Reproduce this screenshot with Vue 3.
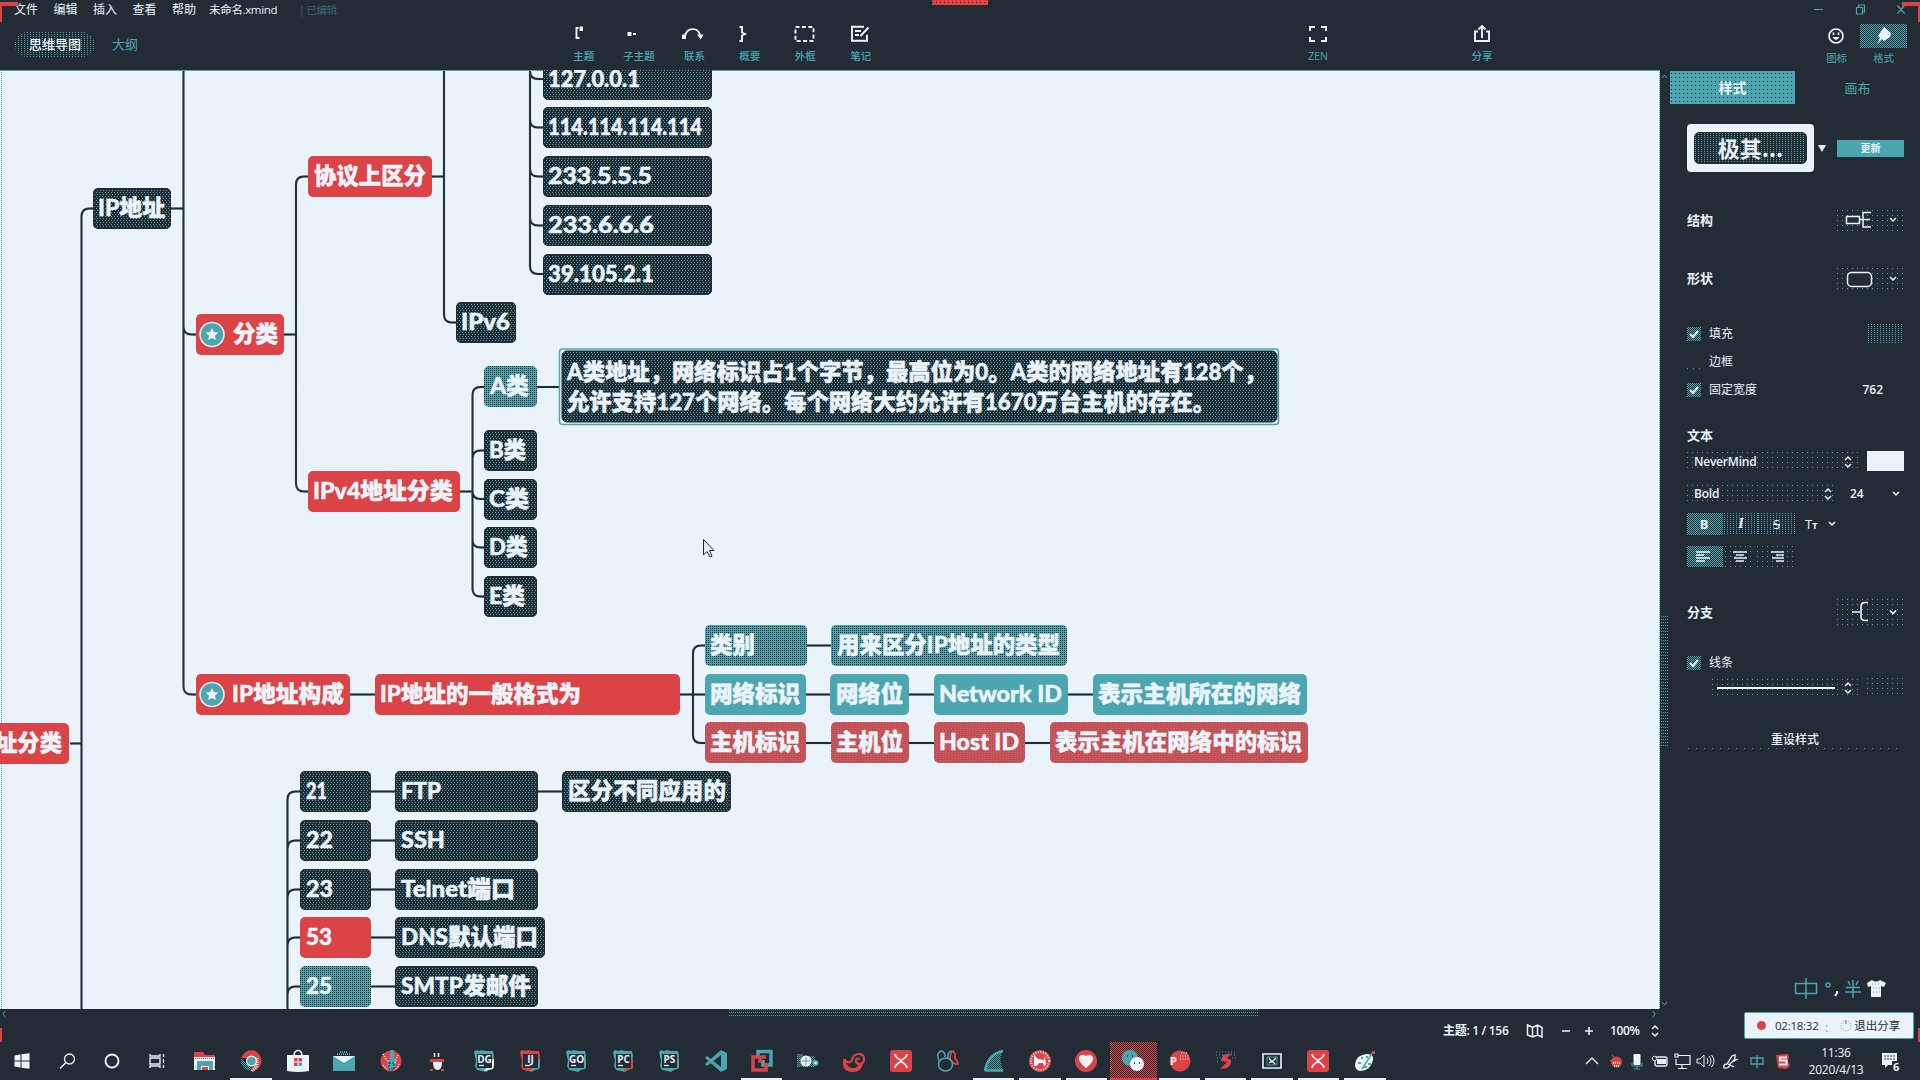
<script setup>
const menus = ['文件', '编辑', '插入', '查看', '帮助']

const tools = [
  { label: '主题', art: '<path d="M6.500 6H4.500V16H7.500" /><path d="M7.500 4.500h3.500v4.500h-3.500z" fill="currentColor" stroke="none"/><path d="M9 6.500h2" />' },
  { label: '子主题', art: '<path d="M0.500 10h4v4h-4zM6 11h3v2h-3z" fill="currentColor" stroke="none"/>' },
  { label: '联系', art: '<path d="M3 14C5 5 16 5 18 13" fill="none"/><path d="M0 12.500h4v4.500h-4zM15 12.500h6.500l-2.800 5z" fill="currentColor" stroke="none"/>' },
  { label: '概要', art: '<path d="M1.500 5h2.500v5.500l3 1.500-3 1.500v5.500H1.500" fill="none"/>' },
  { label: '外框', art: '<rect x="2.500" y="5" width="18" height="14" fill="none" stroke-dasharray="4 2.400"/>' },
  { label: '笔记', art: '<path d="M15 4.800H3v14h15v-6M6 9h6M6 13h4M11.500 14L19.500 5.500" fill="none"/>' },
]

// Mind map nodes: x1, y1, x2, kind, label, text x, text width
const H = 41
const nodes = [
  [93, 188, 171, 'k', 'IP地址', 98, 67],
  [308, 156, 432, 'r', '协议上区分', 314, 112],
  [196, 314, 284, 'r', '分类', 233, 45, 1],
  [456, 302, 516, 'k', 'IPv6', 461, 49],
  [543, 59, 712, 'k', '127.0.0.1', 548, 92],
  [543, 107, 712, 'k', '114.114.114.114', 548, 154],
  [543, 156, 712, 'k', '233.5.5.5', 548, 104],
  [543, 205, 712, 'k', '233.6.6.6', 548, 106],
  [543, 254, 712, 'k', '39.105.2.1', 548, 106],
  [484, 366, 537, 'd', 'A类', 490, 39],
  [484, 430, 537, 'k', 'B类', 489, 37],
  [484, 479, 537, 'k', 'C类', 489, 40],
  [484, 527, 537, 'k', 'D类', 489, 39],
  [484, 576, 537, 'k', 'E类', 489, 36],
  [308, 471, 460, 'r', 'IPv4地址分类', 313, 140],
  [196, 674, 350, 'r', 'IP地址构成', 232, 112, 1],
  [375, 674, 680, 'r', 'IP地址的一般格式为', 380, 201],
  [705, 625, 807, 'd', '类别', 710, 45],
  [831, 625, 1067, 'd', '用来区分IP地址的类型', 837, 223],
  [705, 674, 806, 't', '网络标识', 710, 90],
  [830, 674, 909, 't', '网络位', 836, 67],
  [934, 674, 1068, 't', 'Network ID', 939, 123],
  [1093, 674, 1307, 't', '表示主机所在的网络', 1098, 203],
  [705, 722, 806, 'p', '主机标识', 710, 90],
  [831, 722, 909, 'p', '主机位', 836, 67],
  [934, 722, 1025, 'p', 'Host ID', 939, 80],
  [1050, 722, 1308, 'p', '表示主机在网络中的标识', 1055, 247],
  [-40, 723, 69, 'r', '址分类', -5, 67],
  [300, 771, 371, 'k', '21', 306, 21],
  [300, 820, 371, 'k', '22', 306, 27],
  [300, 869, 371, 'k', '23', 306, 27],
  [300, 917, 371, 'r', '53', 306, 26],
  [300, 966, 371, 'd', '25', 306, 26],
  [395, 771, 538, 'k', 'FTP', 401, 40],
  [395, 820, 538, 'k', 'SSH', 401, 44],
  [395, 869, 538, 'k', 'Telnet端口', 401, 114],
  [395, 917, 545, 'k', 'DNS默认端口', 401, 137],
  [395, 966, 538, 'k', 'SMTP发邮件', 401, 130],
  [562, 771, 731, 'k', '区分不同应用的', 568, 158],
]
const fills = { k: 'url(#dark)', r: '#dc4347', t: '#4ba6b0', d: 'url(#deep)', p: 'url(#warm)' }

const down = (x, ys, x2) => ys.map(y => `M${x} ${y - 16}V${y - 8}Q${x} ${y} ${x + 8} ${y}H${x2}`).join('')
const up = (x, ys, x2) => ys.map(y => `M${x} ${y + 16}V${y + 8}Q${x} ${y} ${x + 8} ${y}H${x2}`).join('')
const wires = [
  'M70 743.500H81.500M171 208.500H183.500M284 334.500H296M432 176.500H444M460 491.500H472.500M537 387H560M350 694.500H375M680 694.500H705',
  'M81.500 216V1009M183.500 70V686M296 184V484M444 70V314M530 70V267M472.500 395V590M693 653V736M287.500 799V1009',
  up(81.5, [208.5], 93), down(183.5, [334.5, 694.5], 196), up(296, [176.5], 308), down(296, [491.5], 308),
  down(444, [322.5], 456), down(530, [79, 127.5, 176.500, 225.500, 274], 543),
  up(472.5, [387, 450.5], 484), down(472.5, [499, 547.5, 596.500], 484),
  up(693, [645.5], 705), down(693, [743], 705), up(287.5, [791.5, 840.5, 889.500, 937.500, 986.500], 300),
  'M807 645.500H831M806 694.500H830M909 694.500H934M1068 694.500H1093M806 743H831M909 743H934M1025 743H1050',
  'M371 791.500H395M538 791.500H562M371 840.500H395M371 889.500H395M371 937.500H395M371 986.500H395',
].join('')

const W = '#ebf3fa', T = '#4ba6b0', R = '#dc4347', K = '#232b35'
const ide = (name, a, b) => `<path d="M2 3l2-2 3 1 3-1 4 1h7l1 5-1 4 1 8-4 1-4 3-4-1-5-1-2-4 1-5z" fill="${a}"/><path d="M12 22l9-2 1-4V9z" fill="${b}"/><path d="M5 5h15v14H5z" fill="${K}"/><text x="12.500" y="13.500" text-anchor="middle" font-size="10" font-weight="700" font-family="Open Sans, sans-serif" fill="${W}">${name}</text><path d="M7 16.500h5" stroke="${W}" stroke-width="1.300"/>`
const xmind = `<rect x="1" y="1" width="22" height="22" rx="3" fill="${R}"/><path d="M6 5q0 3 6 6.500Q18 8 18 5M6 19q0-3 6-6.500 6 3.500 6 6.500" stroke="${W}" stroke-width="1.700" fill="none"/>`
const system = [
  `<path d="M4.500 6.500l6-1v6h-6zM11.500 5.300l8-1v7.200h-8zM4.500 12.500h6v6l-6-1zM11.500 12.500h8v7.200l-8-1z" fill="${W}"/>`,
  `<circle cx="14.500" cy="10" r="5" fill="none" stroke="${W}" stroke-width="1.300"/><path d="M11 13.500L5 19.500" stroke="${W}" stroke-width="1.500"/>`,
  `<circle cx="12" cy="12" r="6.500" fill="none" stroke="${W}" stroke-width="1.900"/>`,
  `<path d="M5 5v2h10V5M5 19v-2h10v2M5 9h10v6H5zM18.500 5v3M18.500 10v4M18.500 16v3" fill="none" stroke="${W}" stroke-width="1.300"/>`,
]
const apps = [
  { art: `<path d="M1 3h9l2 3h10v4H1z" fill="${R}"/><path d="M1 8h21v13H1z" fill="${W}"/><path d="M2 7.500h20M2 9.500h20M2 18h3M19 18h3" stroke="${R}" stroke-dasharray="1 1"/><path d="M4 12h16v9h-4v-4H8v4H4z" fill="${T}"/><path d="M9 18h6v3H9z" fill="${R}"/>` },
  { line: 1, art: `<path d="M2.500 9A10 10 0 0 1 22 9z" fill="${R}"/><path d="M22 9A10 10 0 0 1 11 22l5-8 2-5z" fill="${R}"/><path d="M18 9v8l-5 5" stroke="${W}" stroke-dasharray="1 1" stroke-width="3" fill="none"/><path d="M2.500 9A10 10 0 0 0 11 22l2-6-7-3z" fill="url(#dots)"/><circle cx="12.500" cy="12" r="5.500" fill="${W}"/><circle cx="12.500" cy="12" r="4.300" fill="${T}"/>` },
  { art: `<path d="M8 7Q8 1.500 12 1.500T16 7" fill="none" stroke="${W}" stroke-width="1.600"/><path d="M1 6h22v16q-11 2-22 0z" fill="${W}"/><path d="M8 9h3.500v3.500H8zM8 13.500h3.500V17H8z" fill="${R}"/><path d="M12.500 9H16v3.500h-3.500z" fill="${R}"/><path d="M12.500 13.500H16V17h-3.500z" fill="${T}"/>` },
  { art: `<path d="M1 7h22v15H1z" fill="${T}"/><path d="M1 7h22L12 14z" fill="${W}"/><path d="M5 5h14M8 3h8" stroke="${T}" stroke-dasharray="1 1" stroke-width="2"/>` },
  { art: `<circle cx="12" cy="12" r="10.500" fill="${R}"/><path d="M11 1h4v7l2 4-1 9H9l-1-7 3-5z" fill="${T}"/><path d="M4 5l5 8M19 6l-3 8M4 16l4 4M20 15l-3 5" stroke="${W}" stroke-width="1.500" stroke-dasharray="1 1.500"/><path d="M10 14h5v6h-5z" fill="none" stroke="${K}" stroke-dasharray="2 1"/>` },
  { art: `<path d="M9.500 4v4M13.500 4v4" stroke="${W}" stroke-width="1.500"/><path d="M5 10h14v3H5zM5 20h3v2H5zM16 20h3v2h-3z" fill="${R}"/><path d="M8 13h9q0 8-4.500 8T8 13z" fill="${W}"/>` },
  { art: ide('DG', T, W) }, { art: ide('IJ', R, T) }, { art: ide('GO', T, T) }, { art: ide('PC', T, R) }, { art: ide('PS', T, T) },
  { art: `<path d="M17 1l6 3v16l-6 3L1 9l2-2 14 11V6L3 17l-2-2z" fill="${T}"/>` },
  { line: 1, art: `<path d="M8 7V2.500h13V16h-8V11" fill="none" stroke="${T}" stroke-width="3.500"/><path d="M11 8H3v13h13v-7M16 8H10v6" fill="none" stroke="${R}" stroke-width="3.500"/>` },
  { art: `<path d="M1 5h6l1 2h11v11H1z" fill="url(#dots)"/><circle cx="10" cy="12" r="5.500" fill="${W}"/><path d="M10 8v8M6 12h8" stroke="${T}"/><circle cx="19.500" cy="14" r="3" fill="${T}"/><circle cx="19.500" cy="14" r="1.300" fill="${W}"/>` },
  { art: `<path d="M1 10q0 11 9 11 7 0 8-7" fill="none" stroke="${R}" stroke-width="4"/><path d="M2 12q6 3 7-1 1-6 7-6 5 0 5 5t-5 5q-4-1-3-4 1-2 4-1" fill="none" stroke="${R}" stroke-width="2.200"/>` },
  { art: xmind },
  { art: `<path d="M14 10q0-6 3-8 3 3 2 8 3 2 3 5-4 1-8-5" fill="none" stroke="${R}" stroke-width="1.700"/><path d="M3 12q-3-8 2-10 4 0 4 6M12 9q-1-6 4-7" fill="none" stroke="${T}" stroke-width="1.500"/><ellipse cx="9.500" cy="15.500" rx="7" ry="6.500" fill="none" stroke="${T}" stroke-width="1.500"/>` },
  { line: 1, art: `<path d="M2 21Q5 4 21 1q-5 10 0 20z" fill="url(#dots)"/><path d="M3 22Q6 5 21 2M3 21.500h18" fill="none" stroke="${T}" stroke-width="2.500"/>` },
  { line: 1, art: `<circle cx="12" cy="12" r="11" fill="${R}"/><circle cx="12" cy="12" r="9" fill="none" stroke="${W}" stroke-width="2" stroke-dasharray="1 1.500"/><path d="M6 6l4 4 6 1 1-4 1 9-2 1-1-3h-4l-2 3H6z" fill="${W}"/>` },
  { line: 1, art: `<circle cx="12" cy="12" r="11" fill="${R}"/><path d="M12 19Q4 13 5 8q3-4 7-1 4-3 7 1 1 5-7 11z" fill="${W}"/>` },
  { active: 1, art: `<circle cx="9" cy="9" r="8" fill="${T}"/><circle cx="16" cy="15" r="7" fill="${W}"/><path d="M6 7h1M11 7h1M13 14h1M18 14h1" stroke="${K}" stroke-width="1.500"/>` },
  { line: 1, art: `<circle cx="13" cy="12" r="10.500" fill="${R}"/><path d="M14 4h6M13 7h9M13 10h9" stroke="${W}" stroke-dasharray="1 1.500" fill="none"/><text x="3" y="16" font-size="11" font-weight="700" font-family="Open Sans, sans-serif" fill="${W}">P</text>` },
  { line: 1, art: `<path d="M2 3h20M2 6h20M3 9h4M18 9h4M3 13h3" stroke="${T}" stroke-dasharray="1 2"/><path d="M18 4l-9 2-2 6 6 1-7 7q12 0 11-9l-4-2z" fill="${R}"/>` },
  { line: 1, art: `<path d="M3 5h18v14H3z" fill="${K}" stroke="${W}" stroke-width="1.600"/><path d="M7 8h10v8H7z" fill="none" stroke="${T}"/><path d="M9 9l3 4 4-4M9 14l3-2 3 3" stroke="${W}" fill="none" stroke-width="1.300"/>` },
  { line: 1, art: xmind },
  { line: 1, art: `<path d="M2 17q0-11 12-12 7 0 6 6-2 10-12 11-5 0-6-5z" fill="${W}"/><path d="M5 14h3M8 9h2M13 8h2M15 15h3M11 18h3" stroke="${T}" stroke-width="2"/><path d="M9 20L20 3" stroke="${T}" stroke-width="1.500"/><path d="M19 2h3v3h-3z" fill="${R}"/>` },
]
const tray = [
  [1592, `<path d="M6 15l6-6 6 6" fill="none" stroke="${W}" stroke-width="1.300"/>`],
  [1616, `<path d="M8 6l4 4M6 12h4" stroke="${T}"/><ellipse cx="12.500" cy="13" rx="5.500" ry="5.500" fill="${R}"/><path d="M9 14h8M10 17h6" stroke="${W}" stroke-dasharray="1 1" stroke-width="2"/>`],
  [1637, `<rect x="8.500" y="5" width="7" height="11" rx="1" fill="${W}"/><path d="M7 14v3h10v-3M12 17v3M9 20h6" fill="none" stroke="${T}"/>`],
  [1660, `<rect x="7" y="8" width="12" height="9" rx="2" fill="none" stroke="${W}" stroke-width="1.300"/><path d="M9 10h9v5H9z" fill="${W}"/><circle cx="6.500" cy="9.500" r="2.200" fill="${K}" stroke="${W}"/>`],
  [1682, `<path d="M8 6.500h12v9H6V10M12 16v3M8 19.500h9M5 5h3v3H5z" fill="none" stroke="${W}" stroke-width="1.200"/>`],
  [1705, `<path d="M4 10h3l4-4v12l-4-4H4zM14 9q2 3 0 6M16 7q4 5 0 10M18.500 6q5 6 0 12" fill="none" stroke="${W}"/>`],
  [1731, `<path d="M5 19q-1-4 3-4l5-8 3-1 0 4-5 5q-1 5-6 4zM13 13l6-3M9 15l6 3" fill="none" stroke="${W}" stroke-width="1.300"/>`],
  [1757, `<path d="M6 9h12v6H6zM12 6v13" fill="none" stroke="${T}" stroke-width="1.300"/>`],
  [1783, `<path d="M5 6l12-1 1 3-1 4 2 5-4 3-8-1-1-6z" fill="${R}"/><path d="M16 8.500H9v3h6.500v4H8" fill="none" stroke="${W}" stroke-width="2"/>`],
]
</script>

<template>
  <div class="screen">
    <header>
      <div class="menubar">
        <nav><span v-for="m in menus" :key="m">{{ m }}</span></nav>
        <span class="file">未命名.xmind</span><span class="edited">| 已编辑</span>
        <svg class="winbtns" width="100" height="20" viewBox="1810 0 100 20" fill="none" stroke="#4ba6b0" stroke-width="1.200">
          <path d="M1814 9.500h9M1856.500 7.500h6v6.500h-6zM1858.500 7V5h6v7h-2M1897.500 5.500l7 8M1904.500 5.500l-7 8" />
        </svg>
      </div>
      <div class="toolbar">
        <div class="views"><b class="pill">思维导图</b><span>大纲</span></div>
        <div class="tools">
          <div v-for="t in tools" :key="t.label" class="tool">
            <svg width="24" height="24" viewBox="0 0 24 24" stroke="currentColor" stroke-width="1.900" fill="none" v-html="t.art" />
            <span>{{ t.label }}</span>
          </div>
        </div>
        <div class="tool zen">
          <svg width="24" height="24" viewBox="0 0 24 24" stroke="currentColor" stroke-width="2" fill="none"><path d="M4 9V5h5M15 5h5v4M20 15v4h-5M9 19H4v-4" /></svg>
          <span>ZEN</span>
        </div>
        <div class="tool share">
          <svg width="24" height="24" viewBox="0 0 24 24" stroke="currentColor" stroke-width="1.900" fill="none"><path d="M8 9.500H5V19h14V9.500h-3M12 16V4.500M8.500 7.500L12 4l3.500 3.500" /></svg>
          <span>分享</span>
        </div>
        <div class="tool side emoji">
          <svg width="24" height="24" viewBox="0 0 24 24" stroke="currentColor" stroke-width="1.700" fill="none"><circle cx="11" cy="12" r="7" /><path d="M7.500 13h7q-3.500 6-7 0z" fill="currentColor" stroke="none" /><path d="M8.500 8.500v2.500M13.500 8.500v2.500" /></svg>
          <span>图标</span>
        </div>
        <div class="tool side format">
          <i class="fmt mesh"><svg width="24" height="24" viewBox="0 0 24 24" fill="#ebf3fa"><path d="M12 3l7 6-1 4-6 4-2-2-5 5 3-6-2-2z" /></svg></i>
          <span>格式</span>
        </div>
      </div>
    </header>

    <main>
      <svg class="canvas" width="1660" height="939" viewBox="0 70 1660 939">
        <defs>
          <pattern id="dark" width="3" height="4" patternUnits="userSpaceOnUse"><path fill="#232b35" d="M0 0h3v4H0z" /><path fill="#4ba6b0" d="M0 0h1v1H0zM1 2h1v1H1z" /></pattern>
          <pattern id="deep" width="2" height="2" patternUnits="userSpaceOnUse"><path fill="#4ba6b0" d="M0 0h2v2H0z" /><path fill="#232b35" d="M0 0h1v1H0z" /></pattern>
          <pattern id="warm" width="3" height="4" patternUnits="userSpaceOnUse"><path fill="#dc4347" d="M0 0h3v4H0z" /><path fill="#4ba6b0" d="M0 0h1v1H0zM1 2h1v1H1z" /></pattern>
          <pattern id="dots" width="2" height="2" patternUnits="userSpaceOnUse"><path fill="#4ba6b0" d="M0 0h1v1H0zM1 1h1v1H1z" /></pattern>
        </defs>
        <path d="M1.500 72V1009M1659.500 72V1009" stroke="#4ba6b0" stroke-dasharray="1 1" />
        <path :d="wires" class="halo" /><path :d="wires" class="wire" />
        <g v-for="(n, i) in nodes" :key="i">
          <rect :x="n[0]" :y="n[1]" :width="n[2] - n[0]" :height="H" rx="5" :fill="fills[n[3]]" />
          <rect v-if="n[3] === 'k'" :x="n[0] + .5" :y="n[1] + .5" :width="n[2] - n[0] - 1" :height="H - 1" rx="5" fill="none" stroke="#232b35" />
          <g v-if="n[7]" :transform="`translate(212 ${n[1] + 20.5})`">
            <circle r="12" fill="#4ba6b0" stroke="#ebf3fa" stroke-width="1.500" />
            <path d="M0-6.500L1.900-2.400L6.300-2L3 1.200L3.900 5.600L0 3.400L-3.900 5.600L-3 1.200L-6.300-2L-1.900-2.400z" fill="#ebf3fa" />
          </g>
          <text :x="n[5]" :y="n[1] + 28.3" :textLength="n[6]" lengthAdjust="spacingAndGlyphs">{{ n[4] }}</text>
        </g>
        <rect x="559.500" y="349" width="719" height="75.500" rx="3" fill="none" stroke="#4ba6b0" stroke-width="1.500" />
        <rect x="562" y="351" width="715" height="71" rx="5" fill="url(#dark)" stroke="#232b35" />
        <text x="567" y="380" textLength="699" lengthAdjust="spacingAndGlyphs">A类地址，网络标识占1个字节，最高位为0。A类的网络地址有128个，</text>
        <text x="567" y="410" textLength="648" lengthAdjust="spacingAndGlyphs">允许支持127个网络。每个网络大约允许有1670万台主机的存在。</text>
        <path d="M703.500 539.500v15.500l3.500-3.500 3 5.500 2-1-2.500-5.500h4.500z" fill="#ebf3fa" stroke="#232b35" />
        <path d="M0 70.500H543M712 70.500H1660" stroke="#4ba6b0" />
      </svg>

      <div class="vbar">
        <svg width="10" height="8" viewBox="0 0 10 8" fill="none" stroke="#4ba6b0"><path d="M2 6l2.500-3L7 6" /></svg>
        <i class="thumb mesh3" />
        <svg width="10" height="8" viewBox="0 0 10 8" fill="none" stroke="#4ba6b0"><path d="M2 2l2.500 3L7 2" /></svg>
      </div>

      <aside>
        <div class="tabs"><b>样式</b><span>画布</span></div>
        <div class="theme">
          <div class="card"><b>极其...</b></div>
          <i class="tri" />
          <b class="update">更新</b>
        </div>
        <div class="row head r1"><b>结构</b>
          <svg width="67" height="24" viewBox="1837 210 67 24" class="dd"><g fill="none" stroke="#ebf3fa" stroke-width="1.500"><rect x="1846.500" y="216.500" width="13" height="7" fill="#232b35" /><path d="M1860 219.500h10M1871 212.500h-8v14.500h8" /><path d="M1890 218l3 3 3-3" /></g></svg>
        </div>
        <div class="row head r2"><b>形状</b>
          <svg width="67" height="24" viewBox="1837 268 67 24" class="dd"><g fill="none" stroke="#ebf3fa" stroke-width="1.500"><rect x="1847.500" y="272.500" width="24" height="14" rx="4" fill="#232b35" /><path d="M1890 277l3 3 3-3" /></g></svg>
        </div>
        <div class="row opt r3"><i class="check mesh"><svg width="14" height="14" viewBox="0 0 14 14"><path d="M3 7l3 3 5-6" /></svg></i><span>填充</span><i class="swatch dim" /></div>
        <div class="row opt r4"><i class="check off" /><span>边框</span></div>
        <div class="row opt r5"><i class="check mesh"><svg width="14" height="14" viewBox="0 0 14 14"><path d="M3 7l3 3 5-6" /></svg></i><span>固定宽度</span><span class="num">762</span></div>
        <div class="row head r6"><b>文本</b></div>
        <div class="row r7"><div class="select wide">NeverMind<svg class="ud" width="10" height="14" viewBox="0 0 10 14"><path d="M2 5l3-3 3 3M2 9l3 3 3-3" /></svg></div><i class="swatch white" /></div>
        <div class="row r8"><div class="select">Bold<svg class="ud" width="10" height="14" viewBox="0 0 10 14"><path d="M2 5l3-3 3 3M2 9l3 3 3-3" /></svg></div><span class="size">24</span><svg class="chev" width="10" height="10" viewBox="0 0 10 10"><path d="M2 3l3 3 3-3" /></svg></div>
        <div class="row r9">
          <b class="fb mesh">B</b><em class="fb soft">I</em><s class="fb soft">S</s><span class="tt">T<small>T</small></span>
          <svg class="chev" width="10" height="10" viewBox="0 0 10 10"><path d="M2 3l3 3 3-3" /></svg>
        </div>
        <div class="row r10">
          <svg class="mesh" width="36" height="21" viewBox="0 0 36 21"><path d="M9 6h14M9 9h8M9 12h14M9 15h9" /></svg>
          <svg class="faint" width="30" height="21" viewBox="0 0 30 21"><path d="M8 6h14M11 9h8M9 12h13M11 15h8" /></svg>
          <svg class="faint" width="36" height="21" viewBox="0 0 36 21"><path d="M14 6h13M19 9h8M15 12h12M19 15h8" /></svg>
        </div>
        <div class="row head r11"><b>分支</b>
          <svg width="67" height="26" viewBox="1837 599 67 26" class="dd"><g fill="none" stroke="#ebf3fa" stroke-width="1.600"><path d="M1852 612h8M1868 602.500h-3q-4 0-4 4v10q0 4 4 4h3" /><path d="M1890 610.500l3 3 3-3" /></g></svg>
        </div>
        <div class="row opt r12"><i class="check mesh"><svg width="14" height="14" viewBox="0 0 14 14"><path d="M3 7l3 3 5-6" /></svg></i><span>线条</span></div>
        <div class="row r13"><div class="select line"><i /><svg class="ud" width="10" height="14" viewBox="0 0 10 14"><path d="M2 5l3-3 3 3M2 9l3 3 3-3" /></svg></div><i class="swatch faint" /></div>
        <div class="reset">重设样式</div>
        <div class="ime">
          <svg width="94" height="26" viewBox="1794 975 94 26" fill="none" stroke="#4ba6b0" stroke-width="1.500"><path d="M1795.500 983.500h21v10h-21zM1806 978v21" /><circle cx="1828" cy="985" r="2" /><path d="M1837 991v2l-2 3" stroke="#ebf3fa" stroke-width="2" /><path d="M1848 981l2 4M1858 981l-2 4M1846 987.500h14M1845 992h16M1853 980v18" /><path d="M1867 983l5-3q4 3 8 0l6 3-2 4-3-1v11h-10v-11l-3 1z" fill="#ebf3fa" stroke="none" /><path d="M1872 984h8M1873 988h7M1873 992h7" stroke-dasharray="1 2" stroke-width="1" /></svg>
        </div>
      </aside>
    </main>

    <div class="status">
      <div class="hbar"><svg width="10" height="10" viewBox="0 0 10 10"><path d="M5 2L3 5l2 3" /></svg><i class="mesh3" /><svg width="10" height="10" viewBox="0 0 10 10"><path d="M3 2l2 3-2 3" /></svg></div>
      <div class="info">
        <span class="topic">主题: 1 / 156</span>
        <svg width="18" height="16" viewBox="0 0 18 16"><path d="M1.500 2l5 2.500 5-2.500 4.500 2.500V14l-4.500-2-5 2-5-2zM6.500 4v10M11.500 2v10" /></svg>
        <svg class="minus" width="10" height="10" viewBox="0 0 10 10"><path d="M1 5h8" /></svg>
        <svg class="plus" width="10" height="10" viewBox="0 0 10 10"><path d="M1 5h8M5 1v8" /></svg>
        <span class="zoom">100%</span>
        <svg class="updn" width="10" height="14" viewBox="0 0 10 14"><path d="M2 5l3-3 3 3M2 9l3 3 3-3" /></svg>
      </div>
    </div>

    <footer>
      <div class="sys"><svg v-for="(s, i) in system" :key="i" width="24" height="24" viewBox="0 0 24 24" v-html="s" /></div>
      <div class="apps">
        <div v-for="(a, i) in apps" :key="i" :class="{ line: a.line, active: a.active }"><svg width="24" height="24" viewBox="0 0 24 24" v-html="a.art" /></div>
      </div>
      <svg class="tray" width="216" height="24" viewBox="1580 0 216 24"><g v-for="t in tray" :key="t[0]" :transform="`translate(${t[0] - 12} 0)`" v-html="t[1]" /></svg>
      <div class="clock"><span>11:36</span><span>2020/4/13</span></div>
      <svg class="note" width="22" height="24" viewBox="0 0 22 24"><path d="M2 4h15v12H8l-3 3v-3H2z" fill="#ebf3fa" /><path d="M4 7h11M4 10h11" stroke="#232b35" stroke-dasharray="2 1" /><path d="M12 12h8v10h-8z" fill="#232b35" /><text x="13" y="21.500" font-size="11" font-weight="700" fill="#ebf3fa">6</text></svg>
    </footer>

    <div class="recording"><i /><span>02:18:32</span><em>:</em><svg width="12" height="12" viewBox="0 0 12 12"><circle cx="6" cy="6" r="5" fill="none" stroke="#4ba6b0" stroke-dasharray="1 1.500" /><path d="M6 0v4" stroke="#dc4347" /></svg><span class="leave">退出分享</span></div>
    <i class="mark tl" /><i class="mark tr" /><i class="mark top" /><i class="mark ml" /><i class="mark mr" />
  </div>
</template>

<style>
body { background: #232b35; overflow: hidden; }
</style>

<style scoped>
* { box-sizing: border-box; }
.screen {
  --w: #ebf3fa; --t: #4ba6b0; --r: #dc4347; --k: #232b35;
  position: relative; width: 1920px; height: 1080px; overflow: hidden; background: var(--k); color: var(--w);
  font: 12px/1 "Open Sans", "Noto Sans CJK SC", sans-serif; display: flex; flex-direction: column;
}
svg { display: block; flex: none; }
i, em { font-style: normal; }
.mesh { background: repeating-conic-gradient(var(--t) 0 25%, var(--k) 0 50%) 0 0 / 2px 2px; }
.mesh3 { background: conic-gradient(from 270deg at 1px 1px, var(--t) 90deg, transparent 0) 0 0 / 2px 3px; }
.soft { background: conic-gradient(from 270deg at 1px 1px, var(--t) 90deg, transparent 0) 0 0 / 3px 2px; }
.faint, .dd, .select { background: conic-gradient(from 270deg at 1px 1px, var(--t) 90deg, transparent 0) 0 0 / 5px 5px; }

header { height: 70px; flex: none; white-space: nowrap; }
.menubar { height: 20px; display: flex; align-items: center; padding-left: 14px; }
.menubar nav { display: flex; gap: 15.500px; }
.file { margin-left: 13px; font-size: 11.500px; letter-spacing: -.35px; width: 90px; }
.edited { color: var(--t); font-size: 10.500px; opacity: .5; letter-spacing: -.5px; }
.winbtns { margin-left: auto; margin-right: 10px; }
.toolbar { height: 50px; display: flex; }
.views { width: 556px; padding: 12px 0 0 15px; display: flex; align-items: flex-start; font-size: 13px; line-height: 25px; }
.pill { width: 80px; text-align: center; border-radius: 13px; font-weight: 500; background: conic-gradient(from 270deg at 1px 1px, var(--t) 90deg, transparent 0) 0 0 / 3px 2px; }
.views span { margin-left: 17px; color: var(--t); }
.tools { display: flex; }
.tool { width: 55.400px; padding-top: 2px; display: flex; flex-direction: column; align-items: center; }
.tool span { font-size: 10.500px; line-height: 21px; color: var(--t); font-weight: 500; }
.zen { margin-left: 402px; }
.share { margin-left: 108.500px; }
.side { padding-top: 4px; width: 46px; }
.side span { opacity: .85; }
.emoji { margin-left: 304px; }
.format { width: 48px; }
.fmt { width: 47px; height: 24px; display: flex; justify-content: center; }

main { height: 939px; flex: none; display: flex; }
.canvas { background: var(--w); overflow: hidden; }
.canvas text { font: 900 23px Lato, "Noto Sans CJK SC", sans-serif; fill: var(--w); stroke: var(--w); stroke-width: .5; }
.wire { fill: none; stroke: var(--k); stroke-width: 1.900; }
.halo { fill: none; stroke: var(--t); stroke-width: 2.600; opacity: .4; }
.vbar { width: 10px; display: flex; flex-direction: column; padding: 2px 0 1px; }
.thumb { width: 8px; height: 131px; margin: 536px 0 auto 1px; }

aside { width: 250px; padding-top: 1px; display: flex; flex-direction: column; }
.tabs { display: flex; height: 33px; line-height: 34px; font-size: 13px; text-align: center; }
.tabs b { width: 125px; font-size: 14px; color: var(--w); background: conic-gradient(from 270deg at 1px 1px, var(--k) 90deg, transparent 0) 1px 2px / 4px 4px var(--t); }
.tabs span { width: 125px; color: var(--t); }
.theme { display: flex; align-items: center; margin: 20px 16px 0 17px; height: 48px; }
.card { width: 127px; height: 48px; background: var(--w); border-radius: 4px; padding: 8px 7px; }
.card b { display: block; height: 32px; border-radius: 5px; text-align: center; font: 700 22px/29px "Noto Sans CJK SC", sans-serif; border: 1px solid var(--k); background: conic-gradient(from 270deg at 1px 1px, var(--t) 90deg, var(--k) 0) 0 0 / 3px 2px; }
.tri { margin-left: 4px; border: 4px solid transparent; border-top: 7px solid var(--w); border-bottom: 0; }
.update { margin-left: auto; width: 67px; height: 17px; background: var(--t); text-align: center; font-size: 10px; line-height: 17px; }
.row { display: flex; align-items: center; padding: 0 16px 0 17px; }
.head { justify-content: space-between; font-size: 13px; }
.head b { margin-top: -3px; }
.r1 { height: 24px; margin-top: 38px; }
.r2 { height: 24px; margin-top: 34px; }
.r3 { height: 20px; margin-top: 32px; }
.r4 { height: 20px; margin-top: 8px; }
.r5 { height: 20px; margin-top: 8px; }
.r6 { height: 20px; margin-top: 27px; }
.r7 { height: 20px; margin-top: 4px; }
.r8 { height: 18px; margin-top: 14px; }
.r9 { height: 22px; margin-top: 10px; }
.r10 { height: 21px; margin-top: 11px; }
.r11 { height: 26px; margin-top: 32px; }
.r11 b { margin-top: 0; }
.r12 { height: 20px; margin-top: 28px; }
.r13 { height: 20px; margin-top: 5px; padding-left: 42px; justify-content: space-between; }
.opt span { margin-left: 8px; }
.check { width: 14px; height: 14px; }
.check path { fill: none; stroke: var(--w); stroke-width: 2; }
.off { background: conic-gradient(from 270deg at 1px 1px, var(--t) 90deg, transparent 0) 0 13px / 6px 14px; background-repeat: repeat-x; }
.swatch { width: 36px; height: 20px; margin-left: auto; }
.r7 .swatch, .r13 .swatch { width: 37px; }
.dim { background: conic-gradient(from 270deg at 1px 1px, var(--t) 90deg, transparent 0) 0 0 / 3px 2px; }
.white { background: var(--w); }
.row .num { margin-left: auto; margin-right: 21px; font-weight: 600; font-size: 12px; }
.select { width: 150px; height: 18px; display: flex; align-items: center; justify-content: space-between; padding: 0 4px 0 7px; font-size: 12px; font-weight: 600; letter-spacing: -.2px; }
.wide { width: 171px; padding-top: 2px; padding-right: 5px; }
.line { width: 147px; padding-left: 5px; padding-right: 6px; }
.line i { width: 118px; height: 2px; background: var(--w); }
.ud path, .chev path, .updn path { fill: none; stroke: var(--w); stroke-width: 1.500; }
.size { margin-left: 13px; font-weight: 600; }
.r8 .chev { margin-left: auto; margin-right: 3px; }
.fb { width: 34px; height: 22px; text-align: center; font-size: 13px; line-height: 22px; }
b.fb { width: 36px; padding-right: 2px; }
em.fb { font: italic 600 14px/22px "Liberation Serif", serif; margin-left: 1px; }
s.fb { width: 37px; }
.tt { margin-left: 10px; font-size: 13px; }
.tt small { font-size: 9px; font-weight: 700; }
.r9 .chev { margin-left: 10px; }
.r10 path { stroke: var(--w); stroke-width: 1.600; }
.r10 svg + svg { margin-left: 2px; }
.reset { height: 20px; margin: 32px 18px 0 18px; text-align: center; line-height: 20px; font-size: 12px; font-weight: 500; background: conic-gradient(from 270deg at 1px 1px, var(--t) 90deg, transparent 0) 0 18px / 8px 20px repeat-x; }
.ime { margin: auto 0 8px 124px; }

.status { height: 33px; flex: none; font-weight: 600; }
.hbar { height: 9px; width: 1660px; display: flex; }
.hbar i { width: 530px; height: 9px; margin-left: 719px; }
.hbar svg:last-child { margin-left: auto; }
.hbar path { fill: none; stroke: var(--t); }
.info { display: flex; align-items: center; padding-left: 1443px; height: 26px; white-space: nowrap; }
.info path { fill: none; stroke: var(--w); stroke-width: 1.500; }
.topic { width: 83px; letter-spacing: -.3px; }
.minus { margin-left: 17px; }
.plus { margin-left: 13px; }
.zoom { margin-left: 16px; width: 40px; letter-spacing: -.4px; }

footer { height: 38px; flex: none; display: flex; align-items: center; }
.sys { display: flex; gap: 21px; padding-left: 10px; width: 182px; }
.apps { display: flex; height: 38px; width: 1398px; }
.apps div { width: 46.420px; flex: none; display: flex; align-items: center; justify-content: center; border-bottom: 2px solid transparent; padding-top: 1px; }
.apps .line { border-image: linear-gradient(90deg, transparent 4px, var(--w) 4px 42px, transparent 42px) 2; }
.apps .active { border-bottom-color: var(--r); background: repeating-conic-gradient(var(--r) 0 25%, var(--k) 0 50%) 0 0 / 2px 2px, var(--r); }
.clock { width: 80px; display: flex; flex-direction: column; align-items: center; gap: 4px; font-size: 12px; line-height: 13px; letter-spacing: -.2px; }
.note { margin-left: 4px; }

.recording { position: absolute; left: 1744px; top: 1012px; width: 170px; height: 27px; background: var(--w); border: 1px solid var(--t); border-radius: 2px; color: var(--k); display: flex; align-items: center; padding-left: 12px; white-space: nowrap; }
.recording i { width: 9px; height: 9px; border-radius: 50%; background: var(--r); }
.recording span { margin-left: 9px; font-size: 11.500px; letter-spacing: -.25px; width: 45px; }
.recording em { color: var(--t); margin: 4px 12px 0 5px; }
.recording .leave { margin-left: 2px; letter-spacing: 0; font-size: 11.500px; }
.mark { position: absolute; background: var(--r); }
.tl, .tr { top: 2px; width: 18px; height: 20px; background: linear-gradient(var(--r), var(--r)) 0 0 / 18px 4px no-repeat, linear-gradient(var(--r), var(--r)) 0 0 / 2px 20px no-repeat; }
.tl { left: 0; }
.tr { right: 0; transform: scaleX(-1); }
.top { left: 932px; top: 0; width: 56px; height: 5px; background: conic-gradient(from 270deg at 1px 1px, var(--k) 90deg, transparent 0) 0 2px / 4px 3px var(--r); }
.ml, .mr { top: 1028px; width: 2px; height: 14px; }
.ml { left: 0; }
.mr { right: 0; }
</style>
